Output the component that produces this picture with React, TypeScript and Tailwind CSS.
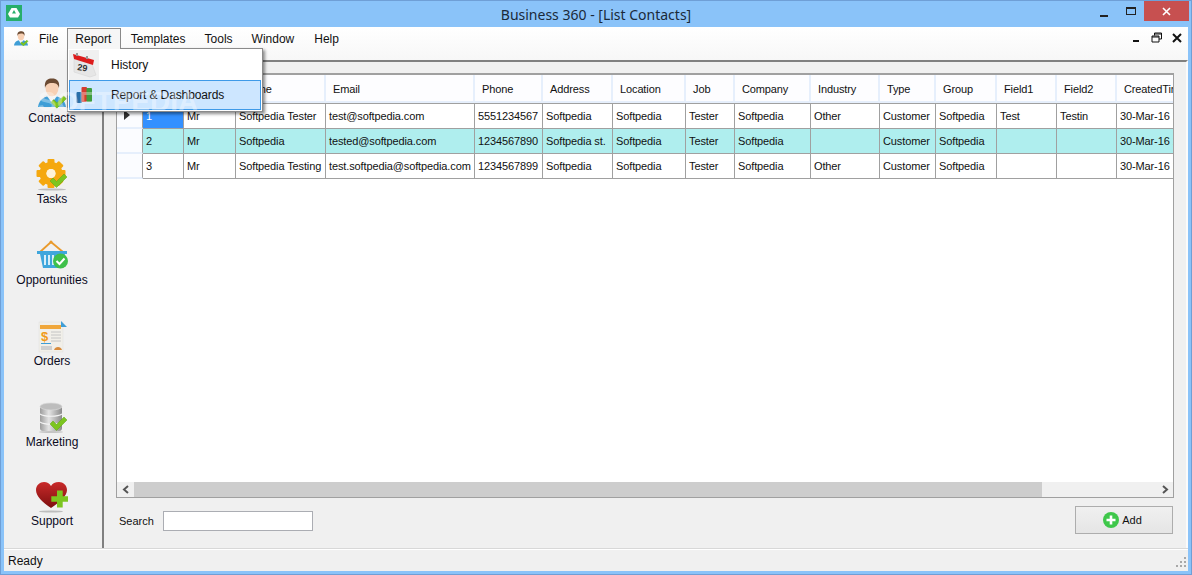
import React from "react";

const font = "font-['Liberation_Sans',Arial,sans-serif]";

const headers = ["", "", "", "Name", "Email", "Phone", "Address", "Location", "Job", "Company", "Industry", "Type", "Group", "Field1", "Field2", "CreatedTime"];
const rows = [
  ["", "1", "Mr", "Softpedia Tester", "test@softpedia.com", "5551234567", "Softpedia", "Softpedia", "Tester", "Softpedia", "Other", "Customer", "Softpedia", "Test", "Testin", "30-Mar-16 10:20"],
  ["", "2", "Mr", "Softpedia", "tested@softpedia.com", "1234567890", "Softpedia st.", "Softpedia", "Tester", "Softpedia", "", "Customer", "Softpedia", "", "", "30-Mar-16 10:20"],
  ["", "3", "Mr", "Softpedia Testing", "test.softpedia@softpedia.com", "1234567899", "Softpedia", "Softpedia", "Tester", "Softpedia", "Other", "Customer", "Softpedia", "", "", "30-Mar-16 10:20"],
];

function Check({ x = 0, y = 0, s = 1 }: { x?: number; y?: number; s?: number }) {
  return (
    <path
      transform={`translate(${x} ${y}) scale(${s})`}
      d="M0 7 L3 4 L6.5 7.5 L14 0 L17 3 L6.5 13.5 Z"
      fill="#7cc520"
      stroke="#5da510"
      strokeWidth="0.5"
    />
  );
}

function UserIcon({ size = 32 }: { size?: number }) {
  return (
    <svg width={size} height={size} viewBox="0 0 32 32">
      <path d="M2 29 C3 21 9 18 16 18 C23 18 29 21 30 29 Z" fill="#3f9ed6" />
      <path d="M11 18 L16 25 L21 18 Z" fill="#f4f4f4" />
      <ellipse cx="16" cy="10" rx="6.5" ry="8.5" fill="#f7d0b4" />
      <path d="M9 10 C8 2 12 0.5 16 0.5 C21 0.5 24 3 23 10 C22 6 20 5 16 5 C12 5 10 6.5 9 10 Z" fill="#6b4a32" />
      <Check x={15} y={18} s={0.9} />
    </svg>
  );
}

function GearIcon() {
  const teeth = [0, 45, 90, 135, 180, 225, 270, 315];
  return (
    <svg width="32" height="32" viewBox="0 0 32 32">
      <ellipse cx="16" cy="30.5" rx="14" ry="1" fill="#bdbdbd" />
      {teeth.map((a) => (
        <rect key={a} x="11.5" y="0" width="7" height="8" rx="1" fill="#f5a80f" transform={`rotate(${a} 15 14.5)`} />
      ))}
      <circle cx="15" cy="14.5" r="8" fill="none" stroke="#f5a80f" strokeWidth="7" />
      <circle cx="15" cy="14.5" r="4.5" fill="#fff3d8" />
      <Check x={14} y={15} s={1} />
    </svg>
  );
}

function BasketIcon() {
  return (
    <svg width="32" height="32" viewBox="0 0 32 32">
      <path d="M4 12 L15 2 L27 12" fill="none" stroke="#e99a2c" strokeWidth="1.8" />
      <rect x="13.5" y="0.5" width="3" height="3" rx="1.5" fill="#e99a2c" />
      <path d="M1 11 H31 V14 H29 L26 28 H7 L4 14 H1 Z" fill="#3fa6dc" />
      <path d="M9 15 V25 M13 15 V25 M17 15 V25" stroke="#d8eef9" strokeWidth="2" />
      <circle cx="24.5" cy="21" r="7.5" fill="#3fc04a" />
      <path d="M20.5 21 L23.5 24 L28.5 18.5" fill="none" stroke="#fff" strokeWidth="2" />
    </svg>
  );
}

function OrdersIcon() {
  return (
    <svg width="32" height="32" viewBox="0 0 32 32">
      <rect x="3" y="1" width="24" height="30" fill="#f1efe9" stroke="#ddd" strokeWidth="0.5" />
      <path d="M25 0 L31 6 L25 6 Z" fill="#3f9ed6" />
      <rect x="4" y="4" width="21" height="4" fill="#f0a73a" />
      <text x="5" y="20" fontSize="13" fontWeight="700" fill="#f09a18" fontFamily="Liberation Sans">$</text>
      <path d="M15 11 H25 M15 14 H25 M15 17 H25 M15 20 H25" stroke="#c4c4c4" strokeWidth="1" />
      <rect x="5" y="22" width="10" height="1" fill="#3f9ed6" />
      <rect x="5" y="25" width="11" height="4" fill="#cfcfcf" />
      <path d="M18 29 C19 25 25 25 26 29 Z" fill="#d98b3c" />
    </svg>
  );
}

function DbIcon() {
  return (
    <svg width="32" height="32" viewBox="0 0 32 32">
      <defs>
        <linearGradient id="db" x1="0" x2="1" y1="0" y2="0">
          <stop offset="0" stopColor="#9c9c9c" />
          <stop offset="0.4" stopColor="#e4e4e4" />
          <stop offset="1" stopColor="#8a8a8a" />
        </linearGradient>
      </defs>
      <ellipse cx="15" cy="30" rx="12" ry="1" fill="#c4c4c4" />
      <rect x="4" y="4" width="22" height="25" rx="3" fill="url(#db)" />
      <ellipse cx="15" cy="4.5" rx="11" ry="3.5" fill="#bdbdbd" stroke="#d8d8d8" strokeWidth="0.7" />
      <path d="M4 12 C8 15 22 15 26 12 M4 20 C8 23 22 23 26 20" fill="none" stroke="#f4f4f4" strokeWidth="1.2" />
      <Check x={14} y={15} s={1} />
    </svg>
  );
}

function HeartIcon() {
  return (
    <svg width="32" height="32" viewBox="0 0 32 32">
      <defs>
        <linearGradient id="hrt" x1="0" x2="0" y1="0" y2="1">
          <stop offset="0" stopColor="#c92a2a" />
          <stop offset="1" stopColor="#7d0f0f" />
        </linearGradient>
      </defs>
      <ellipse cx="15" cy="30.5" rx="12" ry="1" fill="#bdbdbd" />
      <path d="M15 27 C6 21 0 15 0 9 C0 4 4 1 8 1 C11 1 13.5 2.5 15 5 C16.5 2.5 19 1 23 1 C27 1 31 4 31 9 C31 15 24 21 15 27 Z" fill="url(#hrt)" />
      <path d="M20 11 H26 V17 H32 V23 H26 V29 H20 V23 H14 V17 H20 Z" transform="translate(2 -1) scale(0.95)" fill="#7cc520" />
    </svg>
  );
}

function CalendarIcon() {
  return (
    <svg width="26" height="26" viewBox="0 0 26 26">
      <path d="M3 7 L21 12 L25 23 L19 25 L3 20 Z" fill="#e6e6e6" stroke="#d0d0d0" strokeWidth="0.5" />
      <path d="M2 2 L23 8 L22 13 L3 7 Z" fill="#dd1c1c" />
      <rect x="5" y="1" width="2" height="3" fill="#999" />
      <rect x="15" y="4" width="2" height="3" fill="#999" />
      <text x="6" y="18" fontSize="9" fill="#333" fontFamily="Liberation Sans" fontWeight="700" transform="rotate(8 6 18)">29</text>
    </svg>
  );
}

function ChartIcon() {
  return (
    <svg width="17" height="18" viewBox="0 0 17 18">
      <rect x="0.5" y="6" width="5.5" height="11" rx="1" fill="#2a6fa8" />
      <rect x="5.5" y="1" width="5.5" height="15" rx="1" fill="#d53c30" />
      <rect x="10.5" y="2" width="5.5" height="14" rx="1" fill="#3f9e3f" />
    </svg>
  );
}

function SideItem({ icon, label, className = "" }: { icon: React.ReactNode; label: string; className?: string }) {
  return (
    <div className={`flex h-[81px] flex-col items-center ${className}`}>
      <div className="flex h-[32px] w-[32px] items-center justify-center">{icon}</div>
      <div className="h-[16px] text-[12px] leading-[16px] text-[#0b0b1e]">{label}</div>
    </div>
  );
}

function MenuItem({ label }: { label: string }) {
  return <div className="flex h-[20px] items-center px-[9.5px] pt-[1px] text-[12px]">{label}</div>;
}

export default function App() {
  return (
    <div className={`${font} flex h-[575px] w-[1192px] flex-col overflow-hidden border border-[#6f9fd6] bg-[#8ac3f9] text-[11px] text-[#111]`}>
      <div className="relative flex h-[26px] shrink-0 items-center justify-center">
        <div className="absolute left-[5px] top-[4px] flex h-[16px] w-[16px] items-center justify-center bg-[#27ae6b]">
          <svg width="12" height="10" viewBox="0 0 12 10">
            <path d="M3.5 0 L8.5 0 L12 6 L10 9.5 L2 9.5 L0 6 Z" fill="#fff" />
            <path d="M4 5.5 L6 2 L8 5.5 Z" fill="#27ae6b" />
          </svg>
        </div>
        <span className="font-['Noto_Sans',sans-serif] text-[14px] text-[#1a2a3a]">Business 360 - [List Contacts]</span>
        <div className="absolute right-[2px] top-0 flex items-start">
          <div className="flex h-[20px] w-[28px] items-center justify-center pt-[5px]"><div className="mt-[4px] h-[2px] w-[8px] bg-[#222]" /></div>
          <div className="flex h-[20px] w-[26px] items-center justify-center"><div className="h-[8px] w-[10px] border border-t-2 border-[#222]" /></div>
          <div className="flex h-[20px] w-[45px] items-center justify-center bg-[#c75050]">
            <svg width="9" height="9" viewBox="0 0 9 9"><path d="M1 1 L8 8 M8 1 L1 8" stroke="#fff" strokeWidth="1.6" /></svg>
          </div>
        </div>
      </div>

      <div className="relative mx-[3px] mb-[3px] flex min-h-0 flex-1 flex-col bg-[#f0f0f0]">
        {/* Menu bar */}
        <div className="flex h-[33px] shrink-0 items-end justify-between bg-[linear-gradient(to_bottom,#ffffff,#f7f7f7)] pb-[12px] pr-[5px]">
          <div className="flex items-end">
            <div className="mb-[1px] ml-[9px] mr-[0.5px]"><UserIcon size={16} /></div>
            <MenuItem label="File" />
            <div className="relative z-30 -ml-[1px] mr-[0.5px] flex h-[20px] w-[54px] items-center justify-center border border-b-0 border-[#8a8a8a] bg-[#f6f6f6] pr-[1px] pt-[1px] text-[12px]">Report</div>
            <MenuItem label="Templates" />
            <MenuItem label="Tools" />
            <MenuItem label="Window" />
            <div className="ml-[1px]"><MenuItem label="Help" /></div>
          </div>
          <div className="mb-[4px] flex items-center gap-[8px]">
            <svg width="12" height="12" viewBox="0 0 12 12"><rect x="2" y="8" width="6" height="2" fill="#111" /></svg>
            <svg width="12" height="12" viewBox="0 0 12 12"><path d="M3.5 3.5 V1 H10.5 V7 H8 M1 4 H8 V10 H1 Z M1 5 H8 M3.5 2 H10.5" fill="none" stroke="#111" strokeWidth="1" /></svg>
            <svg width="12" height="12" viewBox="0 0 12 12"><path d="M2 2 L10 10 M10 2 L2 10" stroke="#111" strokeWidth="2" /></svg>
          </div>
        </div>

        <div className="flex min-h-0 flex-1">
          {/* Sidebar */}
          <div className="w-[98px] shrink-0 pr-[2px] pt-[18px]">
            <SideItem icon={<UserIcon />} label="Contacts" />
            <SideItem icon={<GearIcon />} label="Tasks" />
            <SideItem icon={<BasketIcon />} label="Opportunities" />
            <SideItem icon={<OrdersIcon />} label="Orders" />
            <SideItem icon={<DbIcon />} label="Marketing" />
            <SideItem icon={<HeartIcon />} label="Support" className="-mt-[2px]" />
          </div>

          {/* Content */}
          <div className="flex min-w-0 flex-1 flex-col border-l-2 border-r-2 border-t-2 border-l-[#808080] border-r-[#fbfbfb] border-t-[#808080] pl-[12px] pr-[12px] pt-[11px]">
            <div className="flex h-[425px] w-[1058px] shrink-0 flex-col border border-t-2 border-[#a0a0a0] bg-white">
              <div className="min-h-0 flex-1 overflow-hidden">
                <div className="grid grid-cols-[26px_41px_52px_90px_149px_68px_70px_73px_49px_76px_69px_56px_61px_60px_60px_100px] grid-rows-[28px_26px_25px_25px] tracking-[-0.12px]">
                  {headers.map((h, i) => (
                    <div key={i} className="flex items-center overflow-hidden whitespace-nowrap border-b-2 border-r-2 border-[#e6effc] bg-[#fdfdff] pl-[7px] pt-[2px] text-[11px]">{h}</div>
                  ))}
                  {rows.map((r, ri) =>
                    r.map((c, ci) => {
                      if (ci === 0) {
                        return (
                          <div key={ci} className="flex items-center justify-center border-b-2 border-r border-b-[#e6effc] border-r-[#a0a0a0] bg-[#fbfcff] pr-[6px]">
                            {ri === 0 && <div className="h-0 w-0 border-y-[5px] border-l-[6px] border-y-transparent border-l-[#333]" />}
                          </div>
                        );
                      }
                      const selected = ri === 0 && ci === 1;
                      const bg = selected ? "bg-[#3390ff] text-white" : ri === 1 ? "bg-[#afeeee]" : "bg-white";
                      const top = ri === 0 ? "border-t" : "";
                      return (
                        <div key={ci} className={`flex items-center overflow-hidden whitespace-nowrap border-b border-r border-[#a0a0a0] pl-[3px] pt-[1px] text-[11px] ${top} ${bg}`}>{c}</div>
                      );
                    })
                  )}
                </div>
              </div>
              <div className="flex h-[15px] shrink-0 items-stretch bg-[#f0f0f0]">
                <div className="flex w-[17px] items-center justify-center">
                  <svg width="8" height="9" viewBox="0 0 8 9"><path d="M6 1 L2 4.5 L6 8" fill="none" stroke="#555" strokeWidth="2" /></svg>
                </div>
                <div className="w-[908px] bg-[#cdcdcd]" />
                <div className="flex-1" />
                <div className="flex w-[17px] items-center justify-center">
                  <svg width="8" height="9" viewBox="0 0 8 9"><path d="M2 1 L6 4.5 L2 8" fill="none" stroke="#555" strokeWidth="2" /></svg>
                </div>
              </div>
            </div>

            <div className="flex flex-1 items-start justify-between pr-[1px] pt-[8px]">
              <div className="ml-[3px] mt-[5px] flex items-center gap-[9px]">
                <span className="text-[11px]">Search</span>
                <div className="h-[20px] w-[150px] border border-[#abadb3] bg-white" />
              </div>
              <div className="flex h-[28px] w-[98px] items-center justify-center gap-[3px] border border-[#adadad] bg-[linear-gradient(to_bottom,#f0f0f0,#e5e5e5)] pr-[3px]">
                <svg width="16" height="16" viewBox="0 0 16 16">
                  <circle cx="8" cy="8" r="8" fill="#3ec74a" />
                  <path d="M8 3.5 V12.5 M3.5 8 H12.5" stroke="#fff" strokeWidth="2.6" />
                </svg>
                <span className="text-[11px]">Add</span>
              </div>
            </div>
          </div>
        </div>

        {/* Status bar */}
        <div className="relative flex h-[23px] shrink-0 items-center border-t border-[#d8d8d8] pl-[4px] pt-[1px] text-[12px] shadow-[inset_0_1px_0_#ffffff]">
          Ready
          <svg className="absolute bottom-[3px] right-[1px]" width="12" height="12" viewBox="0 0 12 12">
            <path d="M9 1h2v2H9zM5 5h2v2H5zM9 5h2v2H9zM1 9h2v2H1zM5 9h2v2H5zM9 9h2v2H9z" fill="#a8a8a8" />
          </svg>
        </div>

        {/* Report dropdown */}
        <div className="absolute left-[63px] top-[21px] z-10 w-[196px] border border-[#8a8a8a] bg-white p-[1px] shadow-[2px_2px_3px_rgba(0,0,0,0.45)]">
          <div className="absolute -top-[1px] left-0 h-[1px] w-[52px] bg-[#f6f6f6]" />
          <div className="flex h-[30px] items-center">
            <div className="flex h-[30px] w-[30px] items-center justify-center bg-[#f0f0f0]"><CalendarIcon /></div>
            <span className="ml-[12px] text-[12px]">History</span>
          </div>
          <div className="flex h-[30px] items-center border border-[#3f9ae8] bg-[#cde6ff]">
            <div className="flex w-[29px] items-center justify-center"><ChartIcon /></div>
            <span className="ml-[12px] text-[12px] tracking-[-0.12px]">Report &amp; Dashboards</span>
          </div>
        </div>

        {/* Watermark */}
        <div className="pointer-events-none absolute left-[34px] top-[60px] z-20 text-[28px] font-bold leading-[30px] text-white/35">SOFTPEDIA</div>
      </div>
    </div>
  );
}
